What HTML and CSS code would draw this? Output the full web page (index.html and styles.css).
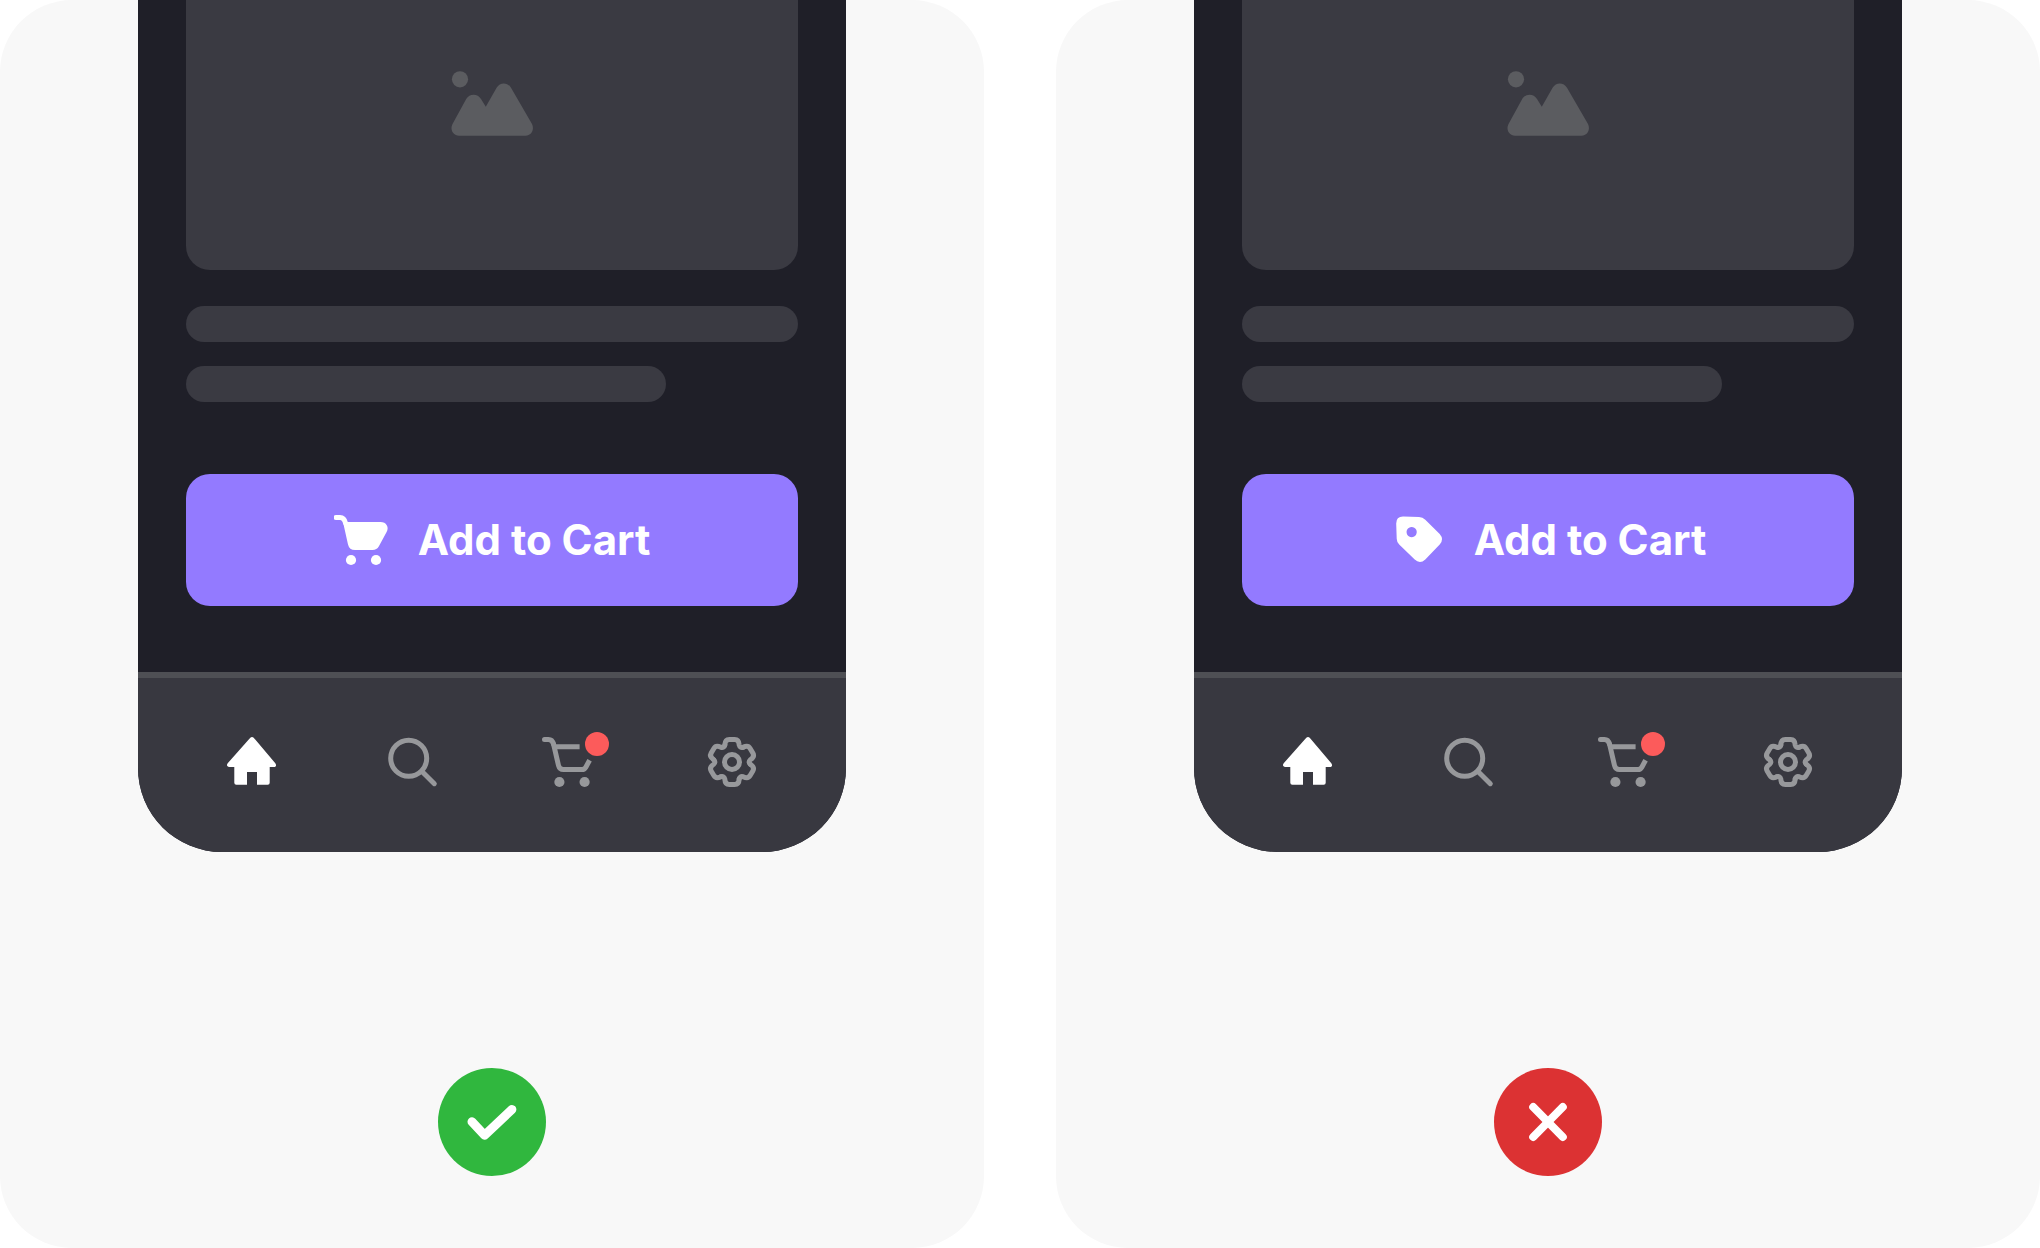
FILE: index.html
```html
<!DOCTYPE html>
<html lang="en">
<head>
<meta charset="utf-8">
<meta name="viewport" content="width=device-width, initial-scale=1">
<title>Add to Cart icon usage</title>
<link rel="stylesheet" href="styles.css">
</head>
<body>
<svg class="symbols" aria-hidden="true">
  <symbol id="picture" viewBox="0 0 84 66">
    <circle cx="10" cy="8.3" r="8.1"/>
    <path d="M9 64.7C3 64.7-.2 58.5 2.4 53.3L16.2 28C19.4 22.3 27.8 22.3 31 28L35.8 35.8 46.6 16.8C49.9 10.9 57.7 10.9 61 16.8L82 53C84.6 58.5 81.5 64.7 75.5 64.7Z"/>
  </symbol>
  <symbol id="home" viewBox="0 0 60 60">
    <path d="M28.3 5.7Q30 4.3 31.7 5.7L53.3 31.3C54.6 33 54.2 35 52 35H47.7V50.7Q47.7 52.7 45.7 52.7H35V40H25V52.7H14.3Q12.3 52.7 12.3 50.7V35H7.3C5 35 4.3 33 5.7 31.3Z"/>
  </symbol>
  <symbol id="search" viewBox="0 0 60 60">
    <g fill="none" stroke="currentColor" stroke-width="5" stroke-linecap="round"><circle cx="26.7" cy="26.3" r="18"/><path d="M40 39.5 52.3 51.7"/></g>
  </symbol>
  <symbol id="cart" viewBox="0 0 60 60">
    <path fill="none" stroke="currentColor" stroke-width="5" stroke-linecap="round" d="M2.5 7.4H6.5Q10.3 7.4 11.5 12"/>
    <path fill="none" stroke="currentColor" stroke-width="5" d="M11.3 11 16.5 33.5Q17.5 37.6 21.5 37.6H40Q42.5 37.6 43.8 35.2L47.6 28.2M12 14.8H37.6"/>
    <circle cx="17.4" cy="50" r="5.1"/><circle cx="42.6" cy="50" r="5.1"/>
  </symbol>
  <symbol id="gear" viewBox="0 0 60 60">
    <g fill="none" stroke="currentColor" stroke-width="5" stroke-linecap="round">
      <circle cx="30" cy="30" r="7.5"/>
      <path id="tooth" d="M22.8 13C23 9.5 24.5 7.5 27.3 7.5H32.7C35.5 7.5 37 9.5 37.2 13Q38 16.2 41.1 15.3"/>
      <use href="#tooth" transform="rotate(60 30 30)"/>
      <use href="#tooth" transform="rotate(120 30 30)"/>
      <use href="#tooth" transform="rotate(180 30 30)"/>
      <use href="#tooth" transform="rotate(240 30 30)"/>
      <use href="#tooth" transform="rotate(300 30 30)"/>
    </g>
  </symbol>
  <symbol id="cart-solid" viewBox="0 0 60 60">
    <path fill="none" stroke="currentColor" stroke-width="5" stroke-linecap="round" d="M2 7.4H6Q10.3 7.4 11.5 13"/>
    <path d="M9 12H46.5C52.2 12 55.5 17 52.6 22L44.9 36.2Q42.8 40 38.5 40H21Q15.3 40 14 34.5Z"/>
    <circle cx="17" cy="50" r="5.1"/><circle cx="42" cy="50" r="5.1"/>
  </symbol>
  <symbol id="tag" viewBox="0 0 60 60">
    <path fill-rule="evenodd" d="M6.2 13.5Q6.2 6.5 13.2 6.6L29 7.1Q32.7 7.2 35.3 9.7L49.7 24Q54.4 29.3 49.7 34.6L35.3 49.4Q30 54.6 24.7 49.6L9.2 34.6Q6.8 32.2 6.7 28.8ZM21.6 17a5.1 5.1 0 1 0 .1 0Z"/>
  </symbol>
</svg>

<main class="comparison">
  <section class="panel" aria-label="Recommended">
    <div class="phone">
      <div class="content">
        <div class="picture"><svg class="picture-icon" aria-hidden="true"><use href="#picture"/></svg></div>
        <div class="lines">
          <div class="line"></div>
          <div class="line line-short"></div>
        </div>
        <button class="add" type="button"><svg class="icon" aria-hidden="true"><use href="#cart-solid"/></svg><span>Add to Cart</span></button>
      </div>
      <nav class="tabs" aria-label="Main">
        <a class="tab tab-active" href="#" aria-label="Home"><svg class="icon"><use href="#home"/></svg></a>
        <a class="tab" href="#" aria-label="Search"><svg class="icon"><use href="#search"/></svg></a>
        <a class="tab" href="#" aria-label="Cart"><svg class="icon"><use href="#cart"/></svg><span class="dot"></span></a>
        <a class="tab" href="#" aria-label="Settings"><svg class="icon"><use href="#gear"/></svg></a>
      </nav>
    </div>
    <div class="verdict verdict-good">
      <svg class="verdict-icon" viewBox="0 0 108 108" role="img" aria-label="Correct"><path stroke-width="9" d="M34 53.7 46.6 67.3 73.9 41.4"/></svg>
    </div>
  </section>

  <section class="panel" aria-label="Not recommended">
    <div class="phone">
      <div class="content">
        <div class="picture"><svg class="picture-icon" aria-hidden="true"><use href="#picture"/></svg></div>
        <div class="lines">
          <div class="line"></div>
          <div class="line line-short"></div>
        </div>
        <button class="add" type="button"><svg class="icon" aria-hidden="true"><use href="#tag"/></svg><span>Add to Cart</span></button>
      </div>
      <nav class="tabs" aria-label="Main">
        <a class="tab tab-active" href="#" aria-label="Home"><svg class="icon"><use href="#home"/></svg></a>
        <a class="tab" href="#" aria-label="Search"><svg class="icon"><use href="#search"/></svg></a>
        <a class="tab" href="#" aria-label="Cart"><svg class="icon"><use href="#cart"/></svg><span class="dot"></span></a>
        <a class="tab" href="#" aria-label="Settings"><svg class="icon"><use href="#gear"/></svg></a>
      </nav>
    </div>
    <div class="verdict verdict-bad">
      <svg class="verdict-icon" viewBox="0 0 108 108" role="img" aria-label="Incorrect"><path stroke-width="8" d="M39.2 39 68.8 69M68.8 39 39.2 69"/></svg>
    </div>
  </section>
</main>
</body>
</html>
```
FILE: styles.css
```css
* {
  box-sizing: border-box;
}

body {
  margin: 0;
  background: #fff;
  font-family: Inter, "Liberation Sans", sans-serif;
}

.symbols {
  position: absolute;
  width: 0;
  height: 0;
}

.comparison {
  display: grid;
  grid-template-columns: 1fr 1fr;
  gap: 72px;
  min-height: 100vh;
}

.panel {
  display: flex;
  flex-direction: column;
  align-items: center;
  justify-content: space-between;
  gap: 72px;
  padding-bottom: 72px;
  border-radius: 72px;
  background: #f8f8f8;
}

.phone {
  width: 100%;
  max-width: 708px;
  overflow: hidden;
  border-radius: 0 0 84px 84px;
  background: #1f1f28;
}

.content {
  padding: 0 48px 66px;
}

.picture {
  display: flex;
  justify-content: center;
  padding: 71px 0 133px;
  border-radius: 0 0 24px 24px;
  background: #3a3a42;
  color: #5b5c60;
}

.picture-icon {
  width: 84px;
  height: 66px;
  fill: currentColor;
}

.lines {
  display: grid;
  gap: 24px;
  padding: 36px 0 72px;
}

.line {
  height: 36px;
  border-radius: 18px;
  background: #3a3a42;
}

.line-short {
  width: 100%;
  max-width: 480px;
}

.add {
  display: flex;
  align-items: center;
  justify-content: center;
  gap: 24px;
  width: 100%;
  height: 132px;
  padding: 0;
  border: 0;
  border-radius: 24px;
  background: #937aff;
  color: #fff;
  font: 700 42px/60px Inter, "Liberation Sans", sans-serif;
}

.icon {
  display: block;
  flex: none;
  width: 60px;
  height: 60px;
  fill: currentColor;
}

.tabs {
  display: flex;
  justify-content: space-between;
  padding: 54px 84px 60px;
  border-top: 6px solid #4e4f54;
  background: #383840;
}

.tab {
  position: relative;
  color: #97989b;
}

.tab-active {
  color: #fff;
}

.dot {
  position: absolute;
  top: 0;
  right: -7px;
  width: 24px;
  height: 24px;
  border-radius: 50%;
  background: #fc5b5b;
}

.verdict {
  width: 108px;
  height: 108px;
  border-radius: 50%;
}

.verdict-good {
  background: #30b73e;
}

.verdict-bad {
  background: #dc3233;
}

.verdict-icon {
  display: block;
  fill: none;
  stroke: #fff;
  stroke-linecap: round;
  stroke-linejoin: round;
}
```
